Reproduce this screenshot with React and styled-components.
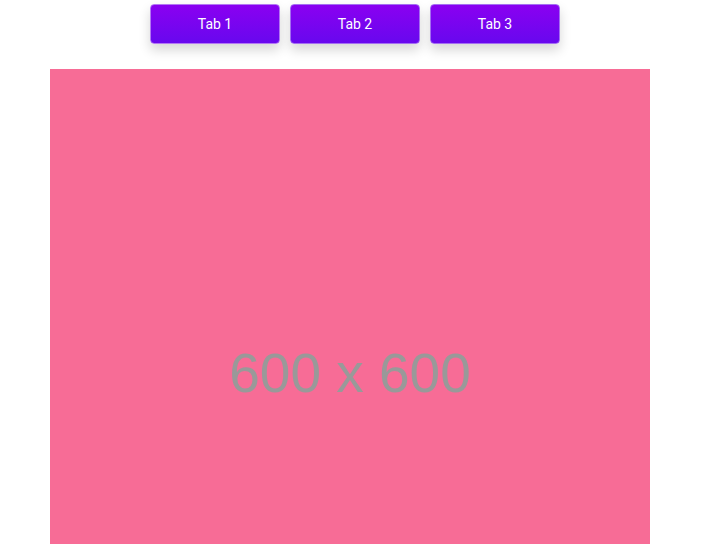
import React, { useState } from 'react';
import styled, { createGlobalStyle } from 'styled-components';

const GlobalStyle = createGlobalStyle`
  html, body {
    margin: 0;
    padding: 0;
    background: #fff;
  }
  body {
    font-family: Roboto, "Noto Sans", sans-serif;
  }
`;

const Page = styled.div`
  display: flex;
  flex-direction: column;
  padding-top: 4px;
`;

const TabBar = styled.div`
  display: flex;
  justify-content: center;
  gap: 10px;
`;

const TabButton = styled.button`
  width: 130px;
  height: 40px;
  border: 1px solid ${props => (props.active ? '#b377f4' : '#a46ef2')};
  border-radius: 4px;
  background: linear-gradient(180deg, #8a00f1 0%, #6808ee 100%);
  box-shadow: 0 6px 12px rgba(0, 0, 0, 0.16);
  color: #fff;
  font-family: Roboto, "Noto Sans", sans-serif;
  font-size: 14px;
  cursor: pointer;
  padding: 0;
`;

const Placeholder = styled.div`
  margin: 25px 0 0 50px;
  width: 600px;
  height: 600px;
  background: ${props => props.color};
  display: flex;
  align-items: center;
  justify-content: center;
  color: #999999;
  font-family: "Liberation Sans", Arial, sans-serif;
  font-size: 55px;
  padding-top: 8px;
  box-sizing: border-box;
`;

const tabs = [
  { id: 1, label: 'Tab 1', color: '#f76c96' },
  { id: 2, label: 'Tab 2', color: '#6cb4f7' },
  { id: 3, label: 'Tab 3', color: '#7ad08a' },
];

export default function App() {
  const [active, setActive] = useState(1);
  const current = tabs.find(t => t.id === active);

  return (
    <Page>
      <GlobalStyle />
      <TabBar>
        {tabs.map(t => (
          <TabButton key={t.id} active={t.id === active} onClick={() => setActive(t.id)}>
            {t.label}
          </TabButton>
        ))}
      </TabBar>
      <Placeholder color={current.color}>600 x 600</Placeholder>
    </Page>
  );
}
